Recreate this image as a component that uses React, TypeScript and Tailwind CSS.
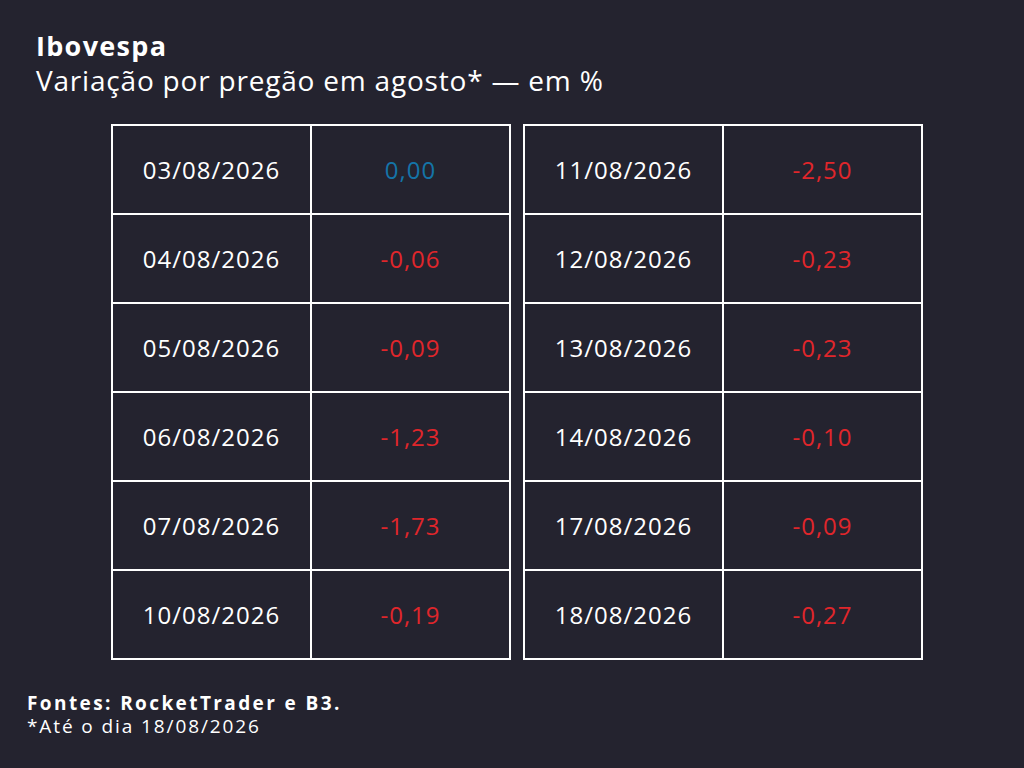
const left = [
  ["03/08/2026", "0,00"],
  ["04/08/2026", "-0,06"],
  ["05/08/2026", "-0,09"],
  ["06/08/2026", "-1,23"],
  ["07/08/2026", "-1,73"],
  ["10/08/2026", "-0,19"],
];

const right = [
  ["11/08/2026", "-2,50"],
  ["12/08/2026", "-0,23"],
  ["13/08/2026", "-0,23"],
  ["14/08/2026", "-0,10"],
  ["17/08/2026", "-0,09"],
  ["18/08/2026", "-0,27"],
];

const font = { fontFamily: '"Open Sans", "Liberation Sans", sans-serif' };

const Table = ({ rows }: { rows: string[][] }) => (
  <div className="grid grid-cols-2 w-[400px] border-t-2 border-l-2 border-white">
    {rows.map(([date, value]) => (
      <div key={date} className="contents">
        <div className="h-[89px] flex items-center justify-center border-r-2 border-b-2 border-white text-[24px] tracking-[1px] text-white">
          {date}
        </div>
        <div
          className={
            value === "0,00"
              ? "h-[89px] flex items-center justify-center border-r-2 border-b-2 border-white text-[24px] tracking-[1px] text-[#1474a8]"
              : "h-[89px] flex items-center justify-center border-r-2 border-b-2 border-white text-[24px] tracking-[1px] text-[#e0262b]"
          }
        >
          {value}
        </div>
      </div>
    ))}
  </div>
);

export default function App() {
  return (
    <div className="w-[1024px] h-[768px] bg-[#24232f] text-white flex flex-col" style={font}>
      <div className="pl-[36px] pt-[29px]">
        <div className="text-[27px] font-bold leading-[34px] tracking-[1.3px]">Ibovespa</div>
        <div className="text-[28px] leading-[34px] tracking-[0.8px]">Variação por pregão em agosto* — em %</div>
      </div>
      <div className="flex gap-[12px] pl-[111px] mt-[27px]">
        <Table rows={left} />
        <Table rows={right} />
      </div>
      <div className="pl-[27px] mt-[32px] text-[19px] leading-[23px]">
        <div className="font-bold tracking-[2.4px]">Fontes: RocketTrader e B3.</div>
        <div className="tracking-[1.9px]">*Até o dia 18/08/2026</div>
      </div>
    </div>
  );
}
